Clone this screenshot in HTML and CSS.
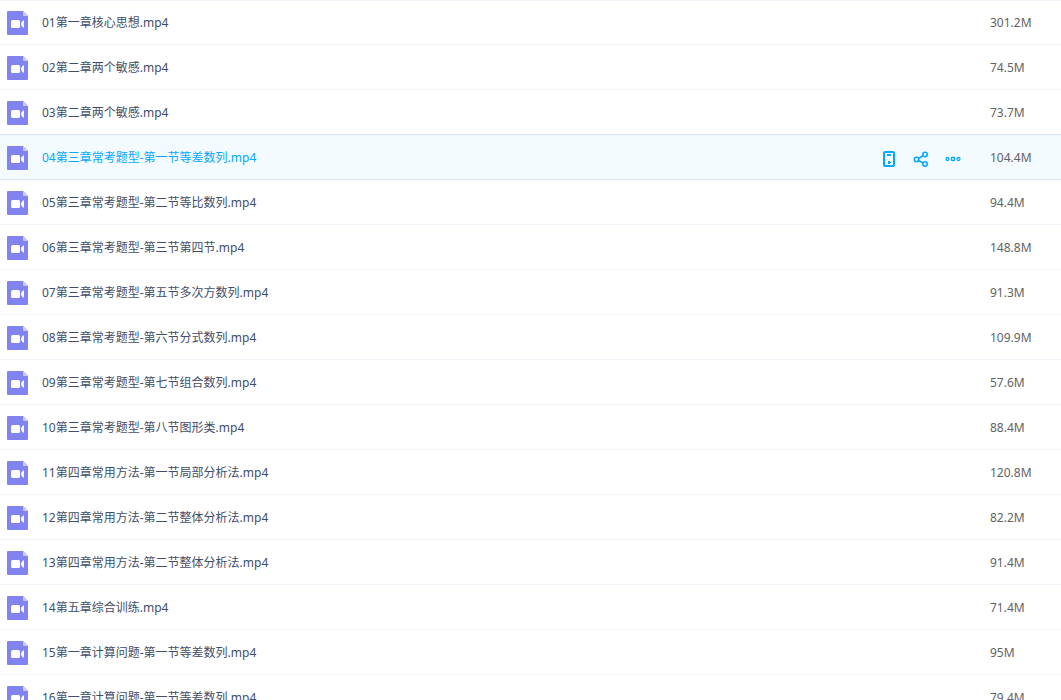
FILE: index.html
```html
<!DOCTYPE html>
<html lang="zh-CN">
<head>
<meta charset="utf-8">
<title>文件列表</title>
<link rel="stylesheet" href="styles.css">
</head>
<body>
<svg class="sprite" aria-hidden="true">
  <symbol id="video" viewBox="0 0 21 24">
    <path fill="#8183f1" d="M1 0H16L21 5V23Q21 24 20 24H1Q0 24 0 23V1Q0 0 1 0Z"/>
    <path fill="#c9cafa" d="M16 0L21 5H17Q16 5 16 4Z"/>
    <rect x="4" y="9" width="9" height="8" rx="1.5" fill="#fff"/>
    <path fill="#fff" d="M14 12L16 9.5H17V16.5H16L14 14Z"/>
  </symbol>
</svg>
<table class="files">
  <tbody>
    <tr class="row"><td class="name"><div class="line"><svg class="icon"><use href="#video"/></svg><a class="link" href="#">01第一章核心思想.mp4</a></div></td><td class="size">301.2M</td></tr>
    <tr class="row"><td class="name"><div class="line"><svg class="icon"><use href="#video"/></svg><a class="link" href="#">02第二章两个敏感.mp4</a></div></td><td class="size">74.5M</td></tr>
    <tr class="row"><td class="name"><div class="line"><svg class="icon"><use href="#video"/></svg><a class="link" href="#">03第二章两个敏感.mp4</a></div></td><td class="size">73.7M</td></tr>
    <tr class="row active"><td class="name"><div class="line"><svg class="icon"><use href="#video"/></svg><a class="link" href="#">04第三章常考题型-第一节等差数列.mp4</a>
      <div class="actions">
        <button class="action" type="button" aria-label="发送到手机"><svg class="glyph" viewBox="0 0 16 16"><rect x="3" y="1" width="10" height="14" rx="1" fill="none" stroke="#06a7ff" stroke-width="2"/><path fill="#06a7ff" d="M6 3H10V5H6ZM7 10H9V11H10V12H9V13H7Z"/></svg></button>
        <button class="action" type="button" aria-label="分享"><svg class="glyph" viewBox="0 0 16 16"><g fill="none" stroke="#06a7ff" stroke-width="1.6"><circle cx="3.5" cy="8.5" r="2.2"/><circle cx="12" cy="3.5" r="2.2"/><circle cx="12" cy="13" r="2.2"/><path d="M5.5 7.5L10 4.8M5.5 9.5L10 12"/></g></svg></button>
        <button class="action" type="button" aria-label="更多"><svg class="glyph" viewBox="0 0 16 16"><g fill="none" stroke="#06a7ff" stroke-width="1.3"><circle cx="2.5" cy="8" r="1.5"/><rect x="6.5" y="6.5" width="3" height="3" rx=".5"/><circle cx="13.5" cy="8" r="1.5"/></g></svg></button>
      </div></div></td><td class="size">104.4M</td></tr>
    <tr class="row"><td class="name"><div class="line"><svg class="icon"><use href="#video"/></svg><a class="link" href="#">05第三章常考题型-第二节等比数列.mp4</a></div></td><td class="size">94.4M</td></tr>
    <tr class="row"><td class="name"><div class="line"><svg class="icon"><use href="#video"/></svg><a class="link" href="#">06第三章常考题型-第三节第四节.mp4</a></div></td><td class="size">148.8M</td></tr>
    <tr class="row"><td class="name"><div class="line"><svg class="icon"><use href="#video"/></svg><a class="link" href="#">07第三章常考题型-第五节多次方数列.mp4</a></div></td><td class="size">91.3M</td></tr>
    <tr class="row"><td class="name"><div class="line"><svg class="icon"><use href="#video"/></svg><a class="link" href="#">08第三章常考题型-第六节分式数列.mp4</a></div></td><td class="size">109.9M</td></tr>
    <tr class="row"><td class="name"><div class="line"><svg class="icon"><use href="#video"/></svg><a class="link" href="#">09第三章常考题型-第七节组合数列.mp4</a></div></td><td class="size">57.6M</td></tr>
    <tr class="row"><td class="name"><div class="line"><svg class="icon"><use href="#video"/></svg><a class="link" href="#">10第三章常考题型-第八节图形类.mp4</a></div></td><td class="size">88.4M</td></tr>
    <tr class="row"><td class="name"><div class="line"><svg class="icon"><use href="#video"/></svg><a class="link" href="#">11第四章常用方法-第一节局部分析法.mp4</a></div></td><td class="size">120.8M</td></tr>
    <tr class="row"><td class="name"><div class="line"><svg class="icon"><use href="#video"/></svg><a class="link" href="#">12第四章常用方法-第二节整体分析法.mp4</a></div></td><td class="size">82.2M</td></tr>
    <tr class="row"><td class="name"><div class="line"><svg class="icon"><use href="#video"/></svg><a class="link" href="#">13第四章常用方法-第二节整体分析法.mp4</a></div></td><td class="size">91.4M</td></tr>
    <tr class="row"><td class="name"><div class="line"><svg class="icon"><use href="#video"/></svg><a class="link" href="#">14第五章综合训练.mp4</a></div></td><td class="size">71.4M</td></tr>
    <tr class="row"><td class="name"><div class="line"><svg class="icon"><use href="#video"/></svg><a class="link" href="#">15第一章计算问题-第一节等差数列.mp4</a></div></td><td class="size">95M</td></tr>
    <tr class="row"><td class="name"><div class="line"><svg class="icon"><use href="#video"/></svg><a class="link" href="#">16第一章计算问题-第一节等差数列.mp4</a></div></td><td class="size">79.4M</td></tr>
  </tbody>
</table>
</body>
</html>
```
FILE: styles.css
```css
* {
  box-sizing: border-box;
}

html {
  overflow: hidden;
}

body {
  margin: 0;
  background: #fff;
  font: 12px/20px "Noto Sans", "Noto Sans CJK SC", sans-serif;
  color: #424e67;
}

.sprite {
  display: none;
}

.files {
  width: 100%;
  border-collapse: separate;
  border-spacing: 0;
}

.name,
.size {
  height: 45px;
  padding: 2px 0 0;
  border-bottom: 1px solid #f1f5fb;
}

.row:first-child > td {
  box-shadow: inset 0 1px #f1f5fb;
}

.row:has(+ .active) > td,
.active > td {
  border-bottom-color: #d9e8f8;
}

.active > td {
  background: #f3fbff;
}

.line {
  display: flex;
  align-items: center;
  height: 42px;
  padding: 0 29px 0 7px;
}

.icon {
  flex: none;
  width: 21px;
  height: 24px;
}

.link {
  margin-left: 14px;
  color: inherit;
  text-decoration: none;
  white-space: nowrap;
}

.active .link {
  color: #06a7ff;
}

.actions {
  display: flex;
  gap: 16px;
  margin: 2px 0 0 auto;
}

.action {
  width: 16px;
  height: 16px;
  padding: 0;
  border: 0;
  background: none;
  cursor: pointer;
}

.glyph {
  display: block;
  width: 16px;
  height: 16px;
}

.size {
  width: 71px;
  color: #636363;
}
```
